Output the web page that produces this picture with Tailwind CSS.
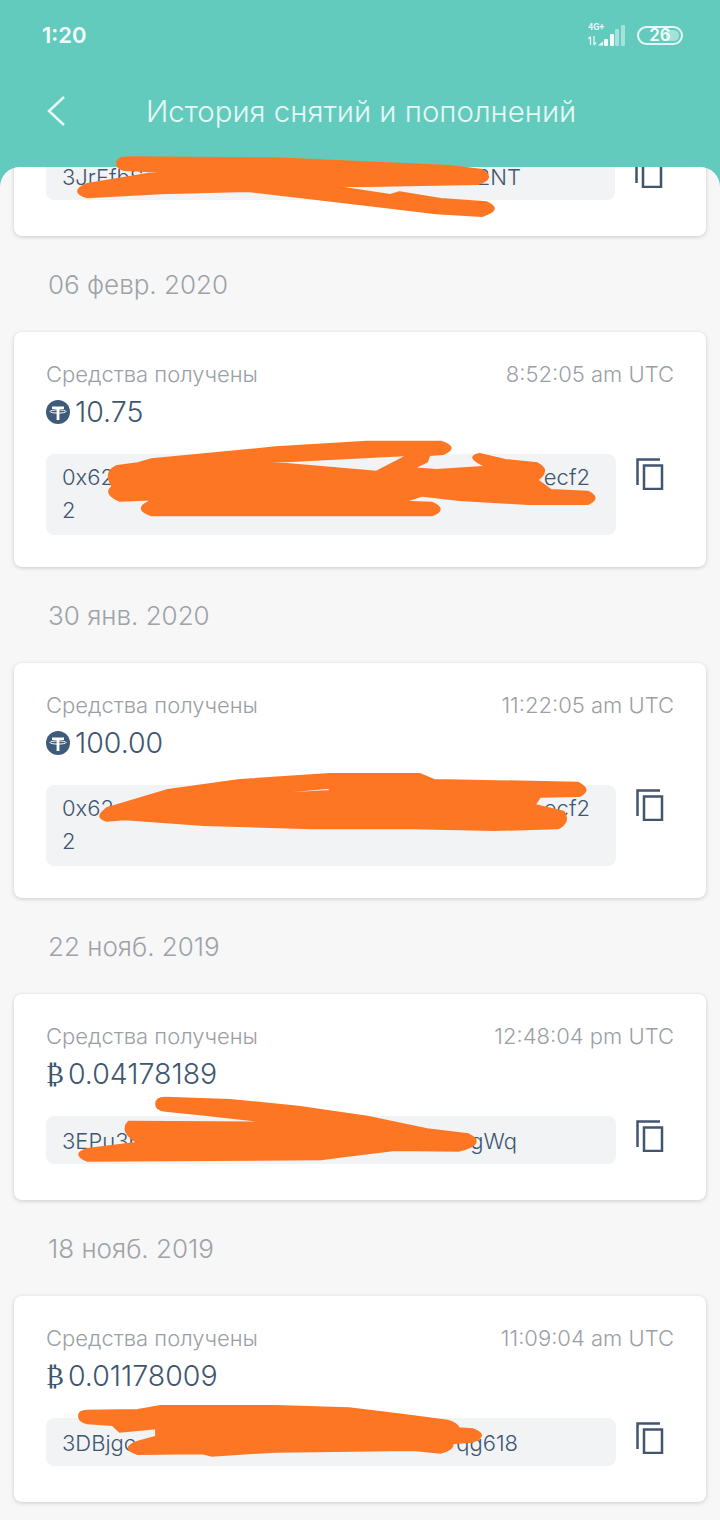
<!DOCTYPE html>
<html lang="ru">
<head>
<meta charset="utf-8">
<script src="https://cdn.jsdelivr.net/npm/@tailwindcss/browser@4"></script>
</head>
<body class="m-0">
<div class="relative w-[720px] h-[1520px] overflow-hidden bg-[#63cbbe] font-['Inter',sans-serif]">
  <header class="h-[167px] flex flex-col">
    <div class="h-[70px] pl-[42px] pr-[37px] flex items-center justify-between">
      <span class="text-[22px] font-semibold text-[#f2fbf9] leading-none">1:20</span>
      <div class="flex items-center gap-[11px]">
        <svg width="38" height="28" viewBox="0 0 38 28">
          <text x="0" y="9" font-size="9" font-weight="700" fill="#e6f8f5" font-family="Roboto">4G+</text>
          <path d="M2.500 24v-8M.5 18l2-2.500M6 15v9M6 24l2-2.500" stroke="#e6f8f5" stroke-width="1.300" fill="none"/>
          <path d="M10 24.500l5-4v4z" fill="#f2fbf9"/>
          <rect x="16" y="18" width="4" height="7" rx="1" fill="#f2fbf9"/>
          <rect x="22" y="13" width="4" height="12" rx="1" fill="#f2fbf9"/>
          <rect x="27" y="8" width="4" height="17" rx="1" fill="#a4e2da"/>
          <rect x="33" y="4" width="4" height="21" rx="1" fill="#a4e2da"/>
        </svg>
        <div class="relative w-[46px] h-[19px] rounded-full border-2 border-[#e6f8f5] flex items-center justify-center">
          <span class="absolute right-[2px] top-[2px] bottom-[2px] w-[13px] rounded-r-full bg-[#a4e2da]"></span>
          <span class="relative text-[17px] font-semibold text-[#f2fbf9] leading-none">26</span>
        </div>
      </div>
    </div>
    <div class="relative h-[84px] flex items-center pl-[146px]">
      <svg class="absolute left-[46px] top-[25px]" width="20" height="32" viewBox="0 0 20 32" fill="none" stroke="#e6f8f5" stroke-width="2.500"><path d="M18 2L3 16l15 14"/></svg>
      <h1 class="text-[29.400px] font-light text-[#e6f8f5] leading-none whitespace-nowrap">История снятий и пополнений</h1>
    </div>
  </header>

  <main class="h-[1353px] bg-[#f7f7f7] rounded-t-[20px] overflow-hidden px-[14px]">
    <section class="-mt-[137px] h-[206px] bg-white rounded-lg shadow-[0_1px_4px_rgba(0,0,0,0.18)] pt-[122px] pl-[32px] pr-[43px] flex gap-[20px]">
      <div class="w-[570px] h-[48px] rounded-lg bg-[#f1f3f5] px-[16px] text-[22px] leading-[50px] font-light text-[#3f5670]"><div class="flex justify-between w-[459px]"><span>3JrFfbS</span><span>ZZ2NT</span></div></div>
      <svg class="mt-[4px] shrink-0" width="28" height="32" viewBox="0 0 28 32" fill="none" stroke="#41566e" stroke-width="2.500"><path d="M1.500 27V1.500H24"/><rect x="8" y="7.500" width="18" height="23.500"/></svg>
    </section>

    <h2 class="h-[96px] pt-[1px] flex items-center pl-[34px] text-[26px] font-light text-[#9ea3a8]">06 февр. 2020</h2>
    <section class="h-[235px] bg-white rounded-lg shadow-[0_1px_4px_rgba(0,0,0,0.18)] pt-[26px] px-[32px]">
      <div class="flex justify-between h-[32px] items-center text-[22px] font-light text-[#9ba0a6]"><span>Средства получены</span><span>8:52:05 am UTC</span></div>
      <div class="flex items-center gap-[5px] h-[40px] mt-[2px] text-[28.500px] font-light text-[#3f5670]">
        <svg width="24" height="24" viewBox="0 0 24 24"><circle cx="12" cy="12" r="12" fill="#3f5b7c"/><path d="M6 6.500h12v2.600h-4.600v11h-2.800v-11H6z" fill="#fff"/><ellipse cx="12" cy="11.500" rx="8" ry="1.600" fill="none" stroke="#fff" stroke-width="1"/></svg>
        <span>10.75</span>
      </div>
      <div class="flex gap-[20px] mt-[22px]">
        <div class="w-[570px] h-[81px] rounded-lg bg-[#f1f3f5] pl-[16px] pr-[26px] py-[7px] text-[22px] leading-[33px] font-light text-[#3f5670] flex flex-col">
          <div class="flex justify-between"><span>0x62</span><span>ecf2</span></div><span>2</span>
        </div>
        <svg class="mt-[4px] shrink-0" width="28" height="32" viewBox="0 0 28 32" fill="none" stroke="#41566e" stroke-width="2.500"><path d="M1.500 27V1.500H24"/><rect x="8" y="7.500" width="18" height="23.500"/></svg>
      </div>
    </section>

    <h2 class="h-[96px] pt-[1px] flex items-center pl-[34px] text-[26px] font-light text-[#9ea3a8]">30 янв. 2020</h2>
    <section class="h-[235px] bg-white rounded-lg shadow-[0_1px_4px_rgba(0,0,0,0.18)] pt-[26px] px-[32px]">
      <div class="flex justify-between h-[32px] items-center text-[22px] font-light text-[#9ba0a6]"><span>Средства получены</span><span>11:22:05 am UTC</span></div>
      <div class="flex items-center gap-[5px] h-[40px] mt-[2px] text-[28.500px] font-light text-[#3f5670]">
        <svg width="24" height="24" viewBox="0 0 24 24"><circle cx="12" cy="12" r="12" fill="#3f5b7c"/><path d="M6 6.500h12v2.600h-4.600v11h-2.800v-11H6z" fill="#fff"/><ellipse cx="12" cy="11.500" rx="8" ry="1.600" fill="none" stroke="#fff" stroke-width="1"/></svg>
        <span>100.00</span>
      </div>
      <div class="flex gap-[20px] mt-[22px]">
        <div class="w-[570px] h-[81px] rounded-lg bg-[#f1f3f5] pl-[16px] pr-[26px] py-[7px] text-[22px] leading-[33px] font-light text-[#3f5670] flex flex-col">
          <div class="flex justify-between"><span>0x62</span><span>ecf2</span></div><span>2</span>
        </div>
        <svg class="mt-[4px] shrink-0" width="28" height="32" viewBox="0 0 28 32" fill="none" stroke="#41566e" stroke-width="2.500"><path d="M1.500 27V1.500H24"/><rect x="8" y="7.500" width="18" height="23.500"/></svg>
      </div>
    </section>

    <h2 class="h-[96px] pt-[1px] flex items-center pl-[34px] text-[26px] font-light text-[#9ea3a8]">22 нояб. 2019</h2>
    <section class="h-[206px] bg-white rounded-lg shadow-[0_1px_4px_rgba(0,0,0,0.18)] pt-[26px] px-[32px]">
      <div class="flex justify-between h-[32px] items-center text-[22px] font-light text-[#9ba0a6]"><span>Средства получены</span><span>12:48:04 pm UTC</span></div>
      <div class="flex items-center gap-[4px] h-[40px] mt-[2px] text-[28.500px] font-light text-[#3f5670]">
        <span class="font-['DejaVu_Sans'] font-normal text-[26px]">₿</span>
        <span>0.04178189</span>
      </div>
      <div class="flex gap-[20px] mt-[22px]">
        <div class="w-[570px] h-[48px] rounded-lg bg-[#f1f3f5] px-[16px] text-[22px] leading-[50px] font-light text-[#3f5670]"><div class="flex justify-between w-[455px]"><span>3EPu3p</span><span>gWq</span></div></div>
        <svg class="mt-[4px] shrink-0" width="28" height="32" viewBox="0 0 28 32" fill="none" stroke="#41566e" stroke-width="2.500"><path d="M1.500 27V1.500H24"/><rect x="8" y="7.500" width="18" height="23.500"/></svg>
      </div>
    </section>

    <h2 class="h-[96px] pt-[1px] flex items-center pl-[34px] text-[26px] font-light text-[#9ea3a8]">18 нояб. 2019</h2>
    <section class="h-[206px] bg-white rounded-lg shadow-[0_1px_4px_rgba(0,0,0,0.18)] pt-[26px] px-[32px]">
      <div class="flex justify-between h-[32px] items-center text-[22px] font-light text-[#9ba0a6]"><span>Средства получены</span><span>11:09:04 am UTC</span></div>
      <div class="flex items-center gap-[4px] h-[40px] mt-[2px] text-[28.500px] font-light text-[#3f5670]">
        <span class="font-['DejaVu_Sans'] font-normal text-[26px]">₿</span>
        <span>0.01178009</span>
      </div>
      <div class="flex gap-[20px] mt-[22px]">
        <div class="w-[570px] h-[48px] rounded-lg bg-[#f1f3f5] px-[16px] text-[22px] leading-[50px] font-light text-[#3f5670]"><div class="flex justify-between w-[456px]"><span>3DBjgc</span><span>qg618</span></div></div>
        <svg class="mt-[4px] shrink-0" width="28" height="32" viewBox="0 0 28 32" fill="none" stroke="#41566e" stroke-width="2.500"><path d="M1.500 27V1.500H24"/><rect x="8" y="7.500" width="18" height="23.500"/></svg>
      </div>
    </section>
  </main>

  <svg class="absolute inset-0 pointer-events-none" width="720" height="1520" viewBox="0 0 720 1520">
    <g fill="#fd7624" stroke="#fd7624" stroke-linejoin="round" stroke-width="2" fill-rule="evenodd">
      <path vector-effect="non-scaling-stroke" transform="scale(.4592 .3333)" d="M255 490Q255 472 280 472L600 475L980 498L1050 510Q1080 535 1040 552L800 558L720 558L850 585L870 577L960 597L1060 607Q1095 628 1050 648L950 640L800 615L540 573L350 580L190 592Q150 575 190 552L350 515L270 510Q255 505 255 490Z"/>
      <path vector-effect="non-scaling-stroke" transform="translate(0 330) scale(.4592 .3333)" d="M300 400L330 388L600 352L800 335L960 335Q1000 352 965 372L935 375L930 395L900 415L950 420L1060 410Q1010 380 1045 372L1100 390L1170 400Q1200 420 1170 450L1200 480L1280 485Q1310 505 1280 522L1150 522L1000 510L920 497L880 515L940 518Q975 538 940 556L330 556Q290 538 325 515L400 505L260 512Q225 490 245 470Q225 425 255 408ZM580 397L890 375L820 425Z"/>
      <path vector-effect="non-scaling-stroke" transform="translate(60 750) scale(.3596 .3333)" d="M115 190L130 175L300 120L500 90L750 72L1000 72L1040 90L1440 98Q1480 120 1445 138L1335 140L1320 165L1400 185Q1420 215 1385 235L1210 240L980 235L700 235L400 225L180 208L130 212Q105 205 115 190ZM470 140L750 113L750 123Z"/>
      <path vector-effect="non-scaling-stroke" transform="translate(0 1000) scale(.4592 .3333)" d="M340 312Q340 293 360 293L500 300L650 320L800 350L930 388L1020 403Q1060 430 1000 452L860 450L740 470L700 478L190 482Q155 462 190 447L300 428Q260 395 280 365L600 368L450 345L360 332Q340 330 340 312Z"/>
      <path vector-effect="non-scaling-stroke" transform="translate(0 1280) scale(.4592 .3333)" d="M172 408Q172 392 190 392L300 390L350 378L600 378L760 385L880 405L975 422Q995 430 1000 445L1030 448Q1065 465 1030 485L985 490Q990 505 960 518L900 510L600 515L460 527L440 520L300 522Q260 505 300 485L340 470L340 445L260 455L245 435L190 430Q172 425 172 408Z"/>
    </g>
  </svg>
</div>
</body>
</html>
